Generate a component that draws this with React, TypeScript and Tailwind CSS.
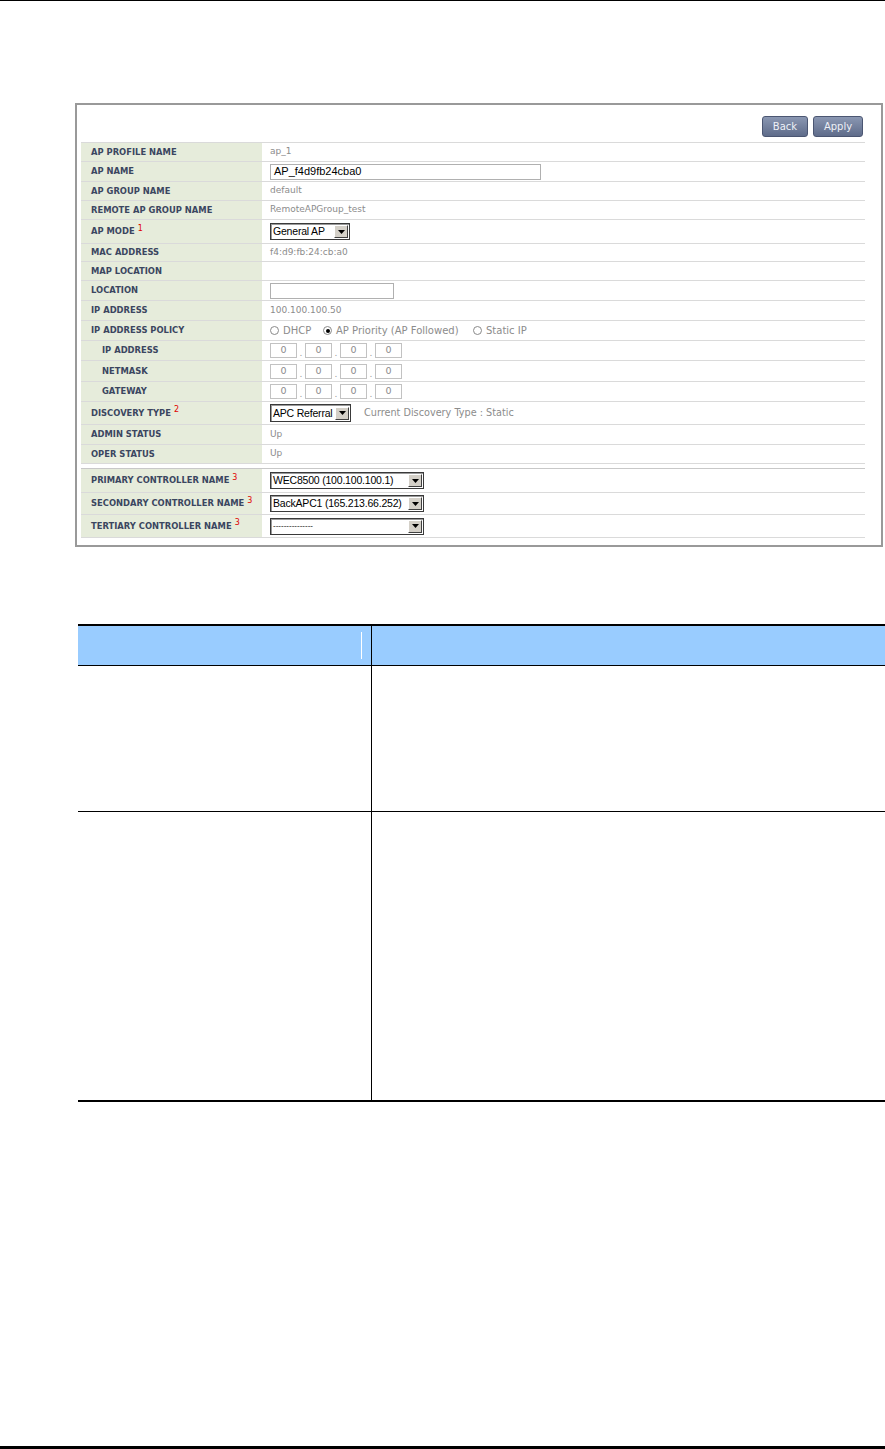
import type { ReactNode } from "react";

const verdana = "font-['DejaVu_Sans',Verdana,sans-serif]";
const arial = "font-['Liberation_Sans',Arial,sans-serif]";

function Arrow() {
  return (
    <div className="mr-px flex h-[13px] w-[14px] shrink-0 items-center justify-center border border-b-[#404040] border-l-white border-r-[#404040] border-t-white bg-[#d4d0c8]">
      <svg width="7" height="4" viewBox="0 0 7 4">
        <path d="M0 0h7L3.5 4z" fill="#000" />
      </svg>
    </div>
  );
}

function Select({ value, className, small }: { value: string; className: string; small?: boolean }) {
  return (
    <div className={`flex items-center border border-[#3a3a3a] bg-white shadow-[inset_1px_1px_0_#9a9a9a] ${className}`}>
      <span
        className={`flex-1 overflow-hidden whitespace-nowrap pl-[2px] leading-none text-black ${arial} ${small ? "text-[8px]" : "text-[10.5px] tracking-[-0.2px]"}`}
      >
        {value}
      </span>
      <Arrow />
    </div>
  );
}

function Radio({ checked, label }: { checked?: boolean; label: string }) {
  return (
    <span className="flex items-center gap-[4px]">
      <span className="flex h-[9px] w-[9px] items-center justify-center rounded-full border border-[#8a8a8a] bg-white">
        {checked && <span className="h-[4px] w-[4px] rounded-full bg-black" />}
      </span>
      <span>{label}</span>
    </span>
  );
}

function Octets() {
  return (
    <div className="flex items-end">
      {[0, 1, 2, 3].map((i) => (
        <div key={i} className="flex items-end">
          {i > 0 && <span className="w-[8px] text-center text-[9px] leading-[10px] text-[#999]">.</span>}
          <div className="flex h-[15px] w-[27px] items-center justify-center border border-[#c2c2c2] text-[9.5px] text-[#8c8c8c]">
            0
          </div>
        </div>
      ))}
    </div>
  );
}

type Row = { label: string; sup?: string; indent?: boolean; h: string; value?: ReactNode };

const rows: Row[] = [
  { label: "AP PROFILE NAME", h: "h-[19px]", value: "ap_1" },
  {
    label: "AP NAME",
    h: "h-[20px]",
    value: (
      <div className={`flex h-[16px] w-[271px] items-center border border-[#b0b0b0] pl-[3px] text-[11px] text-black ${arial}`}>
        AP_f4d9fb24cba0
      </div>
    ),
  },
  { label: "AP GROUP NAME", h: "h-[19px]", value: "default" },
  { label: "REMOTE AP GROUP NAME", h: "h-[19px]", value: "RemoteAPGroup_test" },
  { label: "AP MODE", sup: "1", h: "h-[24px]", value: <Select value="General AP" className="h-[17px] w-[80px]" /> },
  { label: "MAC ADDRESS", h: "h-[18px]", value: "f4:d9:fb:24:cb:a0" },
  { label: "MAP LOCATION", h: "h-[19px]" },
  {
    label: "LOCATION",
    h: "h-[20px]",
    value: <div className="h-[16px] w-[124px] border border-[#b0b0b0]" />,
  },
  { label: "IP ADDRESS", h: "h-[20px]", value: "100.100.100.50" },
  {
    label: "IP ADDRESS POLICY",
    h: "h-[20px]",
    value: (
      <div className="flex items-center text-[10px]">
        <div className="w-[53px]">
          <Radio label="DHCP" />
        </div>
        <div className="w-[150px]">
          <Radio checked label="AP Priority (AP Followed)" />
        </div>
        <Radio label="Static IP" />
      </div>
    ),
  },
  { label: "IP ADDRESS", indent: true, h: "h-[20px]", value: <Octets /> },
  { label: "NETMASK", indent: true, h: "h-[21px]", value: <Octets /> },
  { label: "GATEWAY", indent: true, h: "h-[20px]", value: <Octets /> },
  {
    label: "DISCOVERY TYPE",
    sup: "2",
    h: "h-[23px]",
    value: (
      <div className="flex items-center gap-[13px]">
        <Select value="APC Referral" className="h-[18px] w-[81px]" />
        <span className="text-[9.7px]">Current Discovery Type : Static</span>
      </div>
    ),
  },
  { label: "ADMIN STATUS", h: "h-[20px]", value: "Up" },
  { label: "OPER STATUS", h: "h-[19px]", value: "Up" },
];

const controllers: Row[] = [
  { label: "PRIMARY CONTROLLER NAME", sup: "3", h: "h-[24px]", value: <Select value="WEC8500 (100.100.100.1)" className="h-[17px] w-[154px]" /> },
  { label: "SECONDARY CONTROLLER NAME", sup: "3", h: "h-[22px]", value: <Select value="BackAPC1 (165.213.66.252)" className="h-[17px] w-[154px]" /> },
  { label: "TERTIARY CONTROLLER NAME", sup: "3", h: "h-[23px]", value: <Select value="---------------" small className="h-[17px] w-[154px]" /> },
];

function FormRow({ row }: { row: Row }) {
  return (
    <div className={`flex border-b border-[#dadada] ${row.h}`}>
      <div
        className={`flex w-[181px] shrink-0 items-center bg-[#e6ecdb] text-[8.4px] font-bold text-[#3b4660] ${row.indent ? "pl-[21px]" : "pl-[10px]"}`}
      >
        {row.label}
        {row.sup && <span className="relative -top-[3px] ml-[3px] text-[8px] font-normal text-[#e00000]">{row.sup}</span>}
      </div>
      <div className="flex flex-1 items-center pl-[8px] text-[9px] text-[#8c8c8c]">{row.value}</div>
    </div>
  );
}

function Btn({ label, className }: { label: string; className: string }) {
  return (
    <button
      className={`flex h-[21px] items-center justify-center rounded-[3px] border border-[#4b5672] bg-gradient-to-b from-[#8a97b2] to-[#5f6c8a] text-[10px] text-[#eef1f7] ${className}`}
    >
      {label}
    </button>
  );
}

export default function App() {
  return (
    <div className={`flex h-[1449px] w-[885px] flex-col bg-white ${verdana}`}>
      <div className="h-px bg-black" />

      <div className="ml-[75px] mt-[102px] flex h-[444px] w-[808px] flex-col border-2 border-[#999] pl-[4px] pr-[16px]">
        <div className="flex h-[37px] items-end justify-end gap-[5px] pb-[5px] pr-[2px]">
          <Btn label="Back" className="w-[46px]" />
          <Btn label="Apply" className="w-[50px]" />
        </div>
        <div className="border-t border-[#dadada]">
          {rows.map((r, i) => (
            <FormRow key={i} row={r} />
          ))}
        </div>
        <div className="mt-[4px] border-t border-[#c8c8c8]">
          {controllers.map((r, i) => (
            <FormRow key={i} row={r} />
          ))}
        </div>
      </div>

      <div className="ml-[78px] mt-[77px] w-[807px] border-y-2 border-black">
        <div className="grid h-[40px] grid-cols-[294px_1fr] border-b border-black bg-[#99ccff]">
          <div className="flex items-center justify-end border-r border-black pr-[9px]">
            <div className="h-[27px] w-px bg-white" />
          </div>
          <div />
        </div>
        <div className="grid h-[146px] grid-cols-[294px_1fr] border-b border-black">
          <div className="border-r border-black" />
          <div />
        </div>
        <div className="grid h-[288px] grid-cols-[294px_1fr]">
          <div className="border-r border-black" />
          <div />
        </div>
      </div>

      <div className="mt-auto h-[3px] bg-black" />
    </div>
  );
}
